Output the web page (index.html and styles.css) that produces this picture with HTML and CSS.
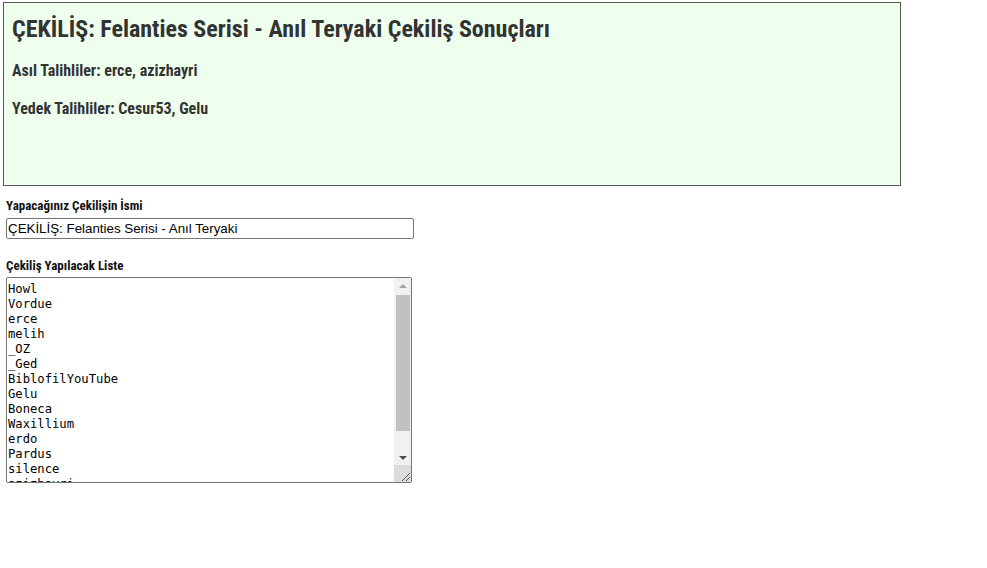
FILE: index.html
```html
<!DOCTYPE html>
<html lang="tr">
<head>
<meta charset="utf-8">
<title>Çekiliş</title>
<link rel="stylesheet" href="styles.css">
</head>
<body>
<div class="page">
  <section class="result">
    <h2 class="result-title">ÇEKİLİŞ: Felanties Serisi - Anıl Teryaki Çekiliş Sonuçları</h2>
    <h4 class="result-line">Asıl Talihliler: erce, azizhayri</h4>
    <h4 class="result-line">Yedek Talihliler: Cesur53, Gelu</h4>
  </section>
  <form class="form">
    <label class="label" for="name">Yapacağınız Çekilişin İsmi</label>
    <input class="text-input" id="name" type="text" value="ÇEKİLİŞ: Felanties Serisi - Anıl Teryaki">
    <label class="label label-list" for="list">Çekiliş Yapılacak Liste</label>
    <div class="list-wrap">
      <textarea class="list-input" id="list">Howl
Vordue
erce
melih
_OZ
_Ged
BiblofilYouTube
Gelu
Boneca
Waxillium
erdo
Pardus
silence
azizhayri
Cesur53</textarea>
      <div class="sb" aria-hidden="true">
        <div class="sb-btn"><span class="arrow-up"></span></div>
        <div class="sb-track"><div class="sb-thumb"></div></div>
        <div class="sb-btn"><span class="arrow-down"></span></div>
        <div class="sb-corner"></div>
      </div>
    </div>
  </form>
</div>
</body>
</html>
```
FILE: styles.css
```css
html, body {
  margin: 0;
  padding: 0;
  background: #ffffff;
}

.page {
  padding: 2px 3px;
}

.result {
  box-sizing: border-box;
  width: 898px;
  height: 184px;
  border: 1px solid #555555;
  background: #eeffee;
  padding: 12px 8px 0;
  font-family: "Roboto Condensed", Roboto, sans-serif;
  font-weight: bold;
  color: #333333;
}

.result-title {
  margin: 0;
  font-size: 24px;
  line-height: 28px;
  font-weight: bold;
}

.result-line {
  margin: 18px 0 0;
  font-size: 16px;
  line-height: 19px;
  font-weight: bold;
}

.result-line + .result-line {
  margin-top: 19px;
}

.form {
  display: flex;
  flex-direction: column;
  align-items: flex-start;
  padding: 12px 3px 0;
}

.label {
  font-family: "Roboto Condensed", Roboto, sans-serif;
  font-weight: bold;
  font-size: 13px;
  line-height: 15px;
  color: #111111;
  margin-bottom: 5px;
}

.label-list {
  margin-top: 19px;
  margin-bottom: 4px;
}

.text-input {
  box-sizing: border-box;
  width: 408px;
  height: 21px;
  margin: 0;
  padding: 0 1px;
  border: 1px solid #767676;
  border-radius: 2px;
  font-family: "Liberation Sans", Arial, sans-serif;
  font-size: 13.333px;
  color: #000000;
  background: #ffffff;
}

.list-wrap {
  position: relative;
  width: 406px;
  height: 206px;
}

.list-input {
  display: block;
  box-sizing: border-box;
  width: 406px;
  height: 206px;
  margin: 0;
  padding: 4px 18px 2px 1px;
  border: 1px solid #767676;
  border-radius: 2px;
  font-family: "DejaVu Sans Mono", "Liberation Mono", monospace;
  font-size: 12.2px;
  line-height: 15px;
  color: #000000;
  background: #ffffff;
  overflow: hidden;
  resize: none;
}

.sb {
  position: absolute;
  top: 1px;
  right: 1px;
  bottom: 1px;
  width: 17px;
  display: flex;
  flex-direction: column;
  background: #f1f1f1;
}

.sb-btn {
  height: 17px;
  flex: none;
  display: flex;
  align-items: center;
  justify-content: center;
}

.arrow-up {
  width: 0;
  height: 0;
  border-left: 4px solid transparent;
  border-right: 4px solid transparent;
  border-bottom: 4px solid #a3a3a3;
  margin-top: -1px;
}

.arrow-down {
  width: 0;
  height: 0;
  border-left: 4px solid transparent;
  border-right: 4px solid transparent;
  border-top: 4px solid #505050;
  margin-top: 2px;
}

.sb-track {
  flex: 1;
  display: flex;
  flex-direction: column;
}

.sb-thumb {
  height: 136px;
  margin: 0 1px 0 2px;
  background: #c1c1c1;
}

.sb-corner {
  height: 17px;
  flex: none;
  background-color: #dcdcdc;
  background-image:
    linear-gradient(135deg, transparent 0 60%, #555555 60% 66%, transparent 66% 80%, #555555 80% 86%, transparent 86%);
  background-size: 11px 11px;
  background-repeat: no-repeat;
  background-position: right 1px bottom 1px;
}
```
